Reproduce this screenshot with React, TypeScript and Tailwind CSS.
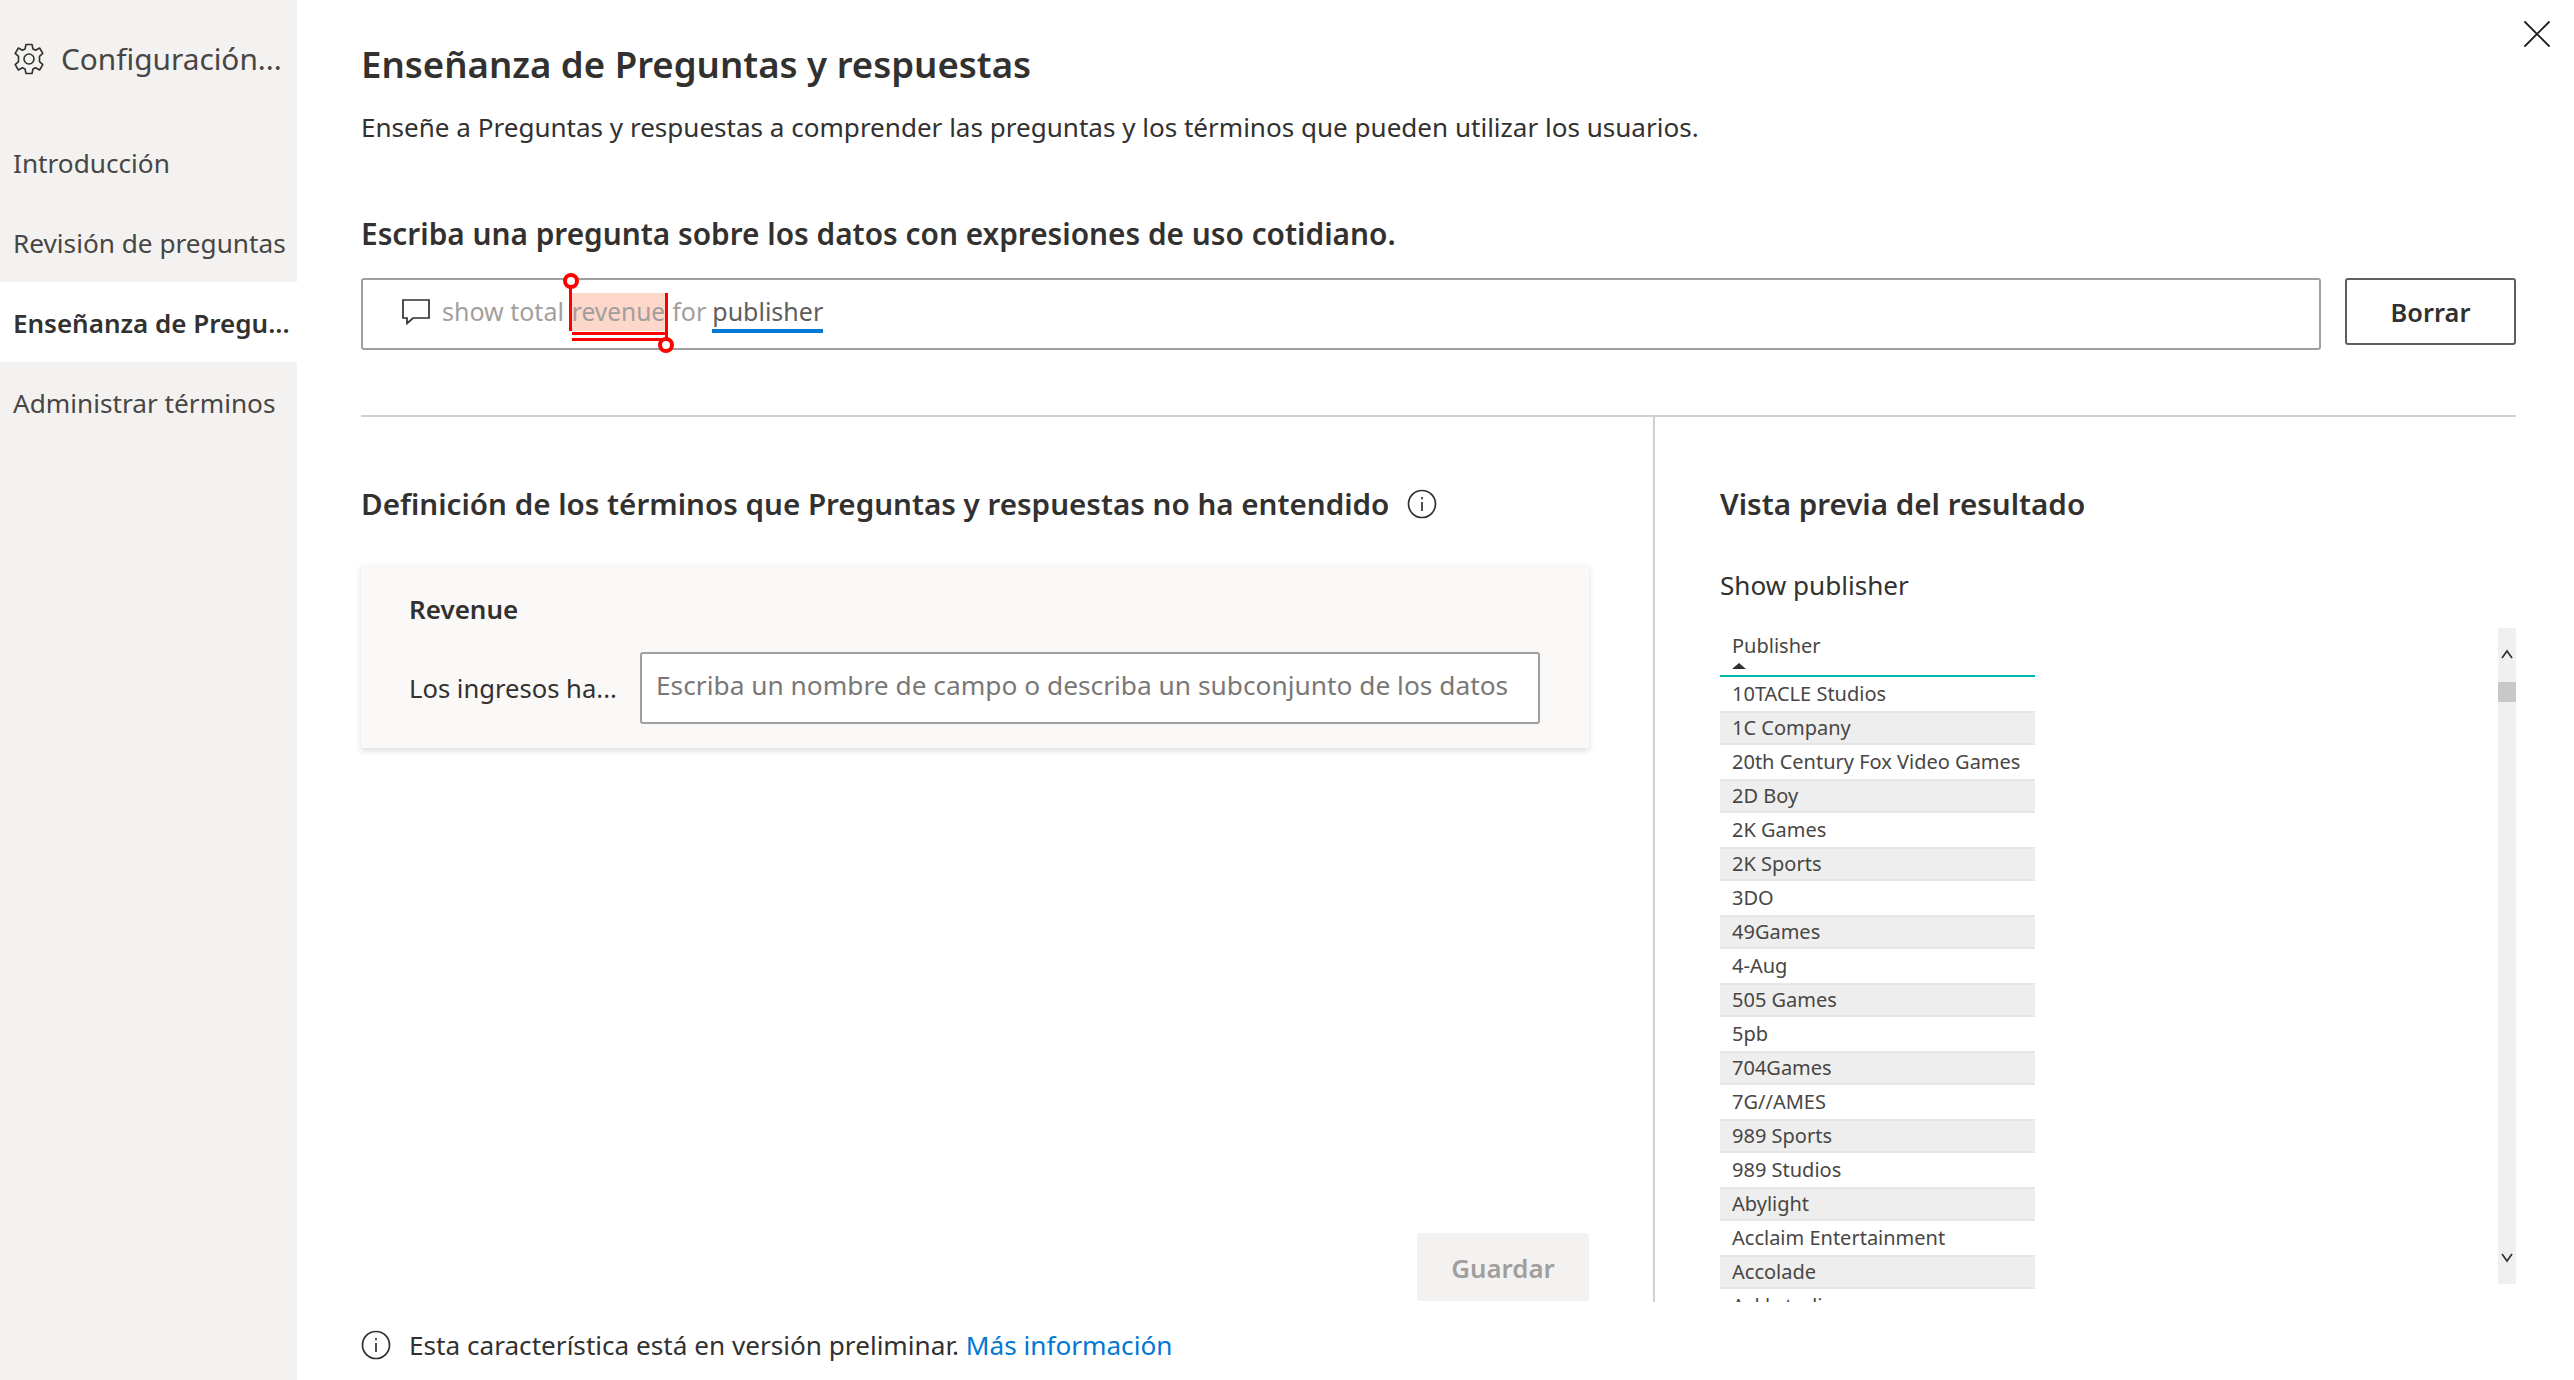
import { X } from "lucide-react";

const font = "font-['Noto_Sans','Open_Sans',sans-serif]";

const navItems = [
  { label: "Introducción" },
  { label: "Revisión de preguntas" },
  { label: "Enseñanza de Pregu...", active: true },
  { label: "Administrar términos" },
];

const publishers = [
  "10TACLE Studios",
  "1C Company",
  "20th Century Fox Video Games",
  "2D Boy",
  "2K Games",
  "2K Sports",
  "3DO",
  "49Games",
  "4-Aug",
  "505 Games",
  "5pb",
  "704Games",
  "7G//AMES",
  "989 Sports",
  "989 Studios",
  "Abylight",
  "Acclaim Entertainment",
  "Accolade",
  "Ackkstudios",
];

function Gear() {
  return (
    <svg width="32" height="32" viewBox="0 0 32 32" fill="none" stroke="#323130" strokeWidth="1.6" strokeLinejoin="round">
      <circle cx="16" cy="16" r="5" />
      <path d="M13 1.500h6l1 4.500 2.600 1.200 4-2.200 3.200 5.400-3.300 3v5.200l3.300 3-3.200 5.400-4-2.200-2.600 1.200-1 4.500h-6l-1-4.500-2.600-1.200-4 2.200-3.200-5.400 3.300-3v-5.200l-3.300-3 3.200-5.400 4 2.200L12 6z" />
    </svg>
  );
}

function InfoIcon() {
  return (
    <svg width="30" height="30" viewBox="0 0 30 30" fill="none" stroke="#323130" strokeWidth="1.7">
      <circle cx="15" cy="15" r="13.500" />
      <path d="M15 13v9" />
      <path d="M15 8v2.200" />
    </svg>
  );
}

function ChatIcon() {
  return (
    <svg width="28" height="26" viewBox="0 0 28 26" fill="none" stroke="#323130" strokeWidth="1.700">
      <path d="M1 1h26v18H11l-6 5.500V19H1z" />
    </svg>
  );
}

function Handle({ className }: { className: string }) {
  return <span className={`absolute h-[16px] w-[16px] rounded-full border-[4px] border-[#ff0000] bg-white ${className}`} />;
}

export default function App() {
  return (
    <div className={`${font} relative flex h-[1380px] w-full overflow-hidden bg-white text-[#323130]`}>
      <aside className="flex w-[297px] shrink-0 flex-col bg-[#f3f2f1]">
        <div className="flex h-[122px] items-center gap-[16px] pb-[4px] pl-[13px]">
          <Gear />
          <span className="text-[29.800px] text-[#484644]">Configuración...</span>
        </div>
        {navItems.map(item => (
          <div
            key={item.label}
            className={`flex h-[80px] items-center whitespace-nowrap pl-[13px] pt-[3px] ${item.active ? "bg-white text-[26px] font-semibold text-[#323130]" : "text-[26.200px] text-[#484644]"}`}
          >
            {item.label}
          </div>
        ))}
      </aside>

      <main className="flex min-w-0 flex-1 flex-col pl-[64px] pr-[58px]">
        <h1 className="mt-[39px] text-[36.600px] leading-[50px] font-semibold text-[#323130]">Enseñanza de Preguntas y respuestas</h1>
        <p className="mt-[18px] text-[26.050px] leading-[40px]">
          Enseñe a Preguntas y respuestas a comprender las preguntas y los términos que pueden utilizar los usuarios.
        </p>
        <h2 className="mt-[67px] text-[29.800px] leading-[40px] font-semibold">
          Escriba una pregunta sobre los datos con expresiones de uso cotidiano.
        </h2>

        <div className="mt-[24px] flex items-start gap-[24px]">
          <div className="flex h-[72px] flex-1 items-center rounded-[3px] border-2 border-[#a19f9d] pb-[5px] pl-[39px] text-[25px] text-[#a19f9d]">
            <ChatIcon />
            <span className="ml-[12px]">show total</span>
            <span className="relative ml-[8px] flex h-[38px] items-center bg-[#fdd7ca] text-[24.500px] leading-[38px]">
              revenue
              <span className="absolute -left-[3px] -top-[8px] h-[46px] w-[3px] bg-[#ff0000]" />
              <span className="absolute -right-[3px] top-0 h-[50px] w-[3px] bg-[#ff0000]" />
              <span className="absolute inset-x-0 top-[39px] h-[3px] bg-[#ff0000]" />
              <span className="absolute inset-x-0 top-[45px] h-[3px] bg-[#ff0000]" />
              <Handle className="-left-[9px] -top-[20px]" />
              <Handle className="-right-[9px] top-[44px]" />
            </span>
            <span className="ml-[7px]">for</span>
            <span className="relative ml-[6px] text-[#605e5c]">
              publisher
              <span className="absolute inset-x-0 -bottom-[3px] h-[4px] bg-[#0078d4]" />
            </span>
          </div>
          <button className="h-[67px] w-[171px] rounded-[3px] border-2 border-[#605e5c] pt-[2px] text-[25.400px] font-semibold">Borrar</button>
        </div>

        <div className="mt-[65px] flex h-[887px] border-t-2 border-[#d2d0ce]">
          <section className="flex w-[1294px] shrink-0 flex-col border-r-2 border-[#d2d0ce] pr-[64px]">
            <div className="mt-[67px] flex items-center gap-[18px]">
              <h2 className="text-[29.600px] leading-[40px] font-semibold">Definición de los términos que Preguntas y respuestas no ha entendido</h2>
              <InfoIcon />
            </div>
            <div className="mt-[40px] h-[184px] bg-[#faf9f8] pl-[48px] pr-[49px] pt-[27px] shadow-[0_3px_6px_rgba(0,0,0,0.13)]">
              <div className="text-[26px] leading-[36px] font-semibold">Revenue</div>
              <div className="mt-[25px] flex items-center">
                <span className="w-[231px] shrink-0 whitespace-nowrap pt-[2px] text-[25.600px]">Los ingresos ha...</span>
                <div className="flex h-[72px] flex-1 items-start rounded-[3px] border-2 border-[#a19f9d] bg-white pl-[14px] pt-[11px] text-[26.300px] leading-[40px] text-[#7a7876]">
                  Escriba un nombre de campo o describa un subconjunto de los datos
                </div>
              </div>
            </div>
            <button className="mb-px ml-auto mt-auto h-[68px] w-[172px] rounded-[3px] bg-[#f3f2f1] pt-[2px] text-[25.800px] font-semibold text-[#a19f9d]">Guardar</button>
          </section>

          <section className="flex min-w-0 flex-1 flex-col overflow-hidden pl-[65px]">
            <h2 className="mt-[67px] text-[29.600px] leading-[40px] font-semibold">Vista previa del resultado</h2>
            <div className="mt-[41px] text-[26.100px] leading-[40px]">Show publisher</div>
            <div className="mt-[23px] flex min-h-0 flex-1 justify-between overflow-hidden">
              <div className="w-[315px]">
                <div className="relative h-[49px] border-b-2 border-[#01b8aa] pl-[12px] text-[20px] leading-[36px] text-[#484644]">
                  Publisher
                  <span className="absolute left-[12px] top-[35px] border-x-[7px] border-b-[6px] border-x-transparent border-b-[#323130]" />
                </div>
                {publishers.map((name, i) => (
                  <div
                    key={name}
                    className={`h-[34px] whitespace-nowrap pl-[12px] text-[20px] ${i % 2 === 1 ? "border-y-2 border-[#e6e6e6] bg-[#eeeeee] leading-[30px]" : "leading-[34px]"} text-[#484644]`}
                  >
                    {name}
                  </div>
                ))}
              </div>
              <div className="relative h-[656px] w-[18px] bg-[#f0f0f0]">
                <svg className="absolute left-[3px] top-[20px]" width="12" height="12" viewBox="0 0 12 12" fill="none" stroke="#323130" strokeWidth="1.700">
                  <path d="M1 10l5-7 5 7" />
                </svg>
                <div className="absolute inset-x-0 top-[54px] h-[20px] bg-[#c8c8c8]" />
                <svg className="absolute bottom-[20px] left-[3px]" width="12" height="12" viewBox="0 0 12 12" fill="none" stroke="#323130" strokeWidth="1.700">
                  <path d="M1 2l5 7 5-7" />
                </svg>
              </div>
            </div>
          </section>
        </div>

        <div className="mt-[28px] flex items-center gap-[18px] text-[26.150px] leading-[30px]">
          <InfoIcon />
          <span>
            Esta característica está en versión preliminar. <a className="text-[#0078d4]">Más información</a>
          </span>
        </div>
      </main>

      <button className="absolute right-[13px] top-[10px] text-[#201f1e]" aria-label="Cerrar">
        <X size={48} strokeWidth={0.9} />
      </button>
    </div>
  );
}
